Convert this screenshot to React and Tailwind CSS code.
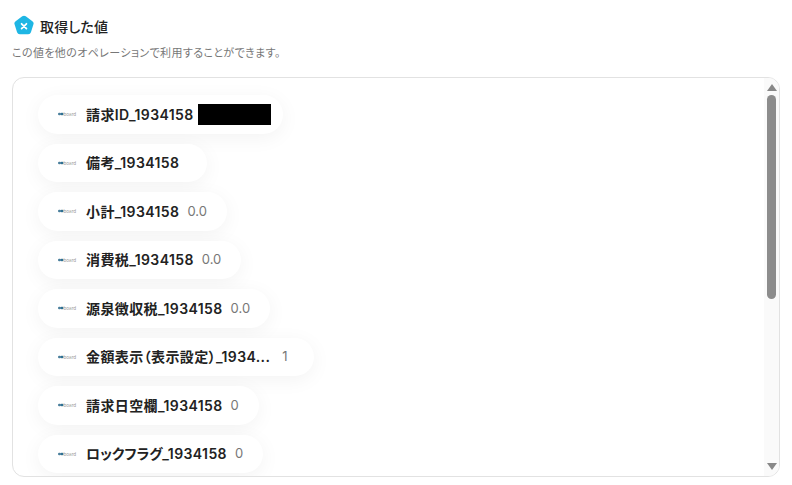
import React from 'react';

const FONT = "font-['Inter','Noto_Sans_CJK_JP',sans-serif]";

const rows = [
  { label: '請求ID_1934158', redacted: true },
  { label: '備考_1934158', value: '' },
  { label: '小計_1934158', value: '0.0' },
  { label: '消費税_1934158', value: '0.0' },
  { label: '源泉徴収税_1934158', value: '0.0' },
  { label: '金額表示（表示設定）_1934...', value: '1', wide: true },
  { label: '請求日空欄_1934158', value: '0' },
  { label: '_1934158', kana: 'ロックフラグ', value: '0' },
];

// tiny "board" service logo
const BoardLogo = () => (
  <svg width="20" height="6" viewBox="0 0 20 6" className="shrink-0">
    <rect x="0" y="1.8" width="3" height="2.4" rx="1.2" fill="#4a7f9c" />
    <rect x="2.5" y="1.8" width="3" height="2.4" rx="1.2" fill="#2f6f92" />
    <text x="5.5" y="4.6" fontSize="4.6" fill="#999" fontFamily="Inter, sans-serif">board</text>
  </svg>
);

const Pill = ({ row }) => (
  <div className={`flex items-center h-[38.5px] w-fit shrink-0 rounded-full bg-white pl-[20px] shadow-[0_4px_20px_rgba(0,0,0,0.05)] ${row.redacted ? 'pr-[12px]' : row.wide ? 'pr-[26px]' : 'pr-[20px]'}`}>
    <BoardLogo />
    <span className="ml-[8px] text-[14px] font-semibold text-[#222] tracking-[0.4px] whitespace-nowrap [font-feature-settings:'palt']">
      {row.kana && <span className="tracking-[-0.1px]">{row.kana}</span>}
      {row.label}
    </span>
    {row.redacted ? (
      <span className="ml-[4px] w-[73px] h-[21px] bg-black" />
    ) : (
      <span className={`text-[13px] text-[#777] ${row.wide ? 'ml-[12px]' : 'ml-[8px]'}`}>{row.value}</span>
    )}
  </div>
);

export default function App() {
  return (
    <div className={`${FONT} w-[792px] h-[485px] overflow-hidden bg-white px-[12px] pt-[15px]`}>
      <div className="flex items-center gap-[5px] pl-[1px] h-[22px]">
        <svg width="22" height="22" viewBox="0 0 20 20">
          <path d="M8.4 1.2a2.6 2.6 0 0 1 3.2 0l6 4.4a2.6 2.6 0 0 1 1 2.9l-2.3 7.1a2.6 2.6 0 0 1-2.5 1.8H6.200a2.6 2.6 0 0 1-2.500-1.800L1.400 8.500a2.600 2.600 0 0 1 1-2.900z" fill="#1eb6e4" />
          <path d="M7.800 8l4.400 4.400M12.200 8l-4.400 4.400" stroke="#fff" strokeWidth="1.600" strokeLinecap="round" />
        </svg>
        <h2 className="text-[14px] font-medium text-[#222] tracking-[0.2px] [font-feature-settings:'palt']">取得した値</h2>
      </div>
      <p className="mt-[8px] text-[11px] leading-[16px] text-[#777] tracking-[0.38px] [font-feature-settings:'palt']">この値を他のオペレーションで利用することができます。</p>

      <div className="mt-[16px] flex h-[400px] w-[768px] overflow-hidden rounded-[12px] border border-[#e2e2e2]">
        <div className="flex flex-1 flex-col gap-[10px] overflow-hidden pl-[25px] pt-[17px]">
          {rows.map((row) => (
            <Pill key={row.kana || row.label} row={row} />
          ))}
        </div>
        <div className="flex w-[15px] shrink-0 flex-col items-center bg-[#fafafa] py-[6px]">
          <div className="h-0 w-0 border-x-[5px] border-b-[7px] border-x-transparent border-b-[#888]" />
          <div className="mt-[4px] h-[204px] w-[9px] rounded-full bg-[#8c8c8c]" />
          <div className="flex-1" />
          <div className="h-0 w-0 border-x-[5px] border-t-[7px] border-x-transparent border-t-[#888]" />
        </div>
      </div>
    </div>
  );
}
